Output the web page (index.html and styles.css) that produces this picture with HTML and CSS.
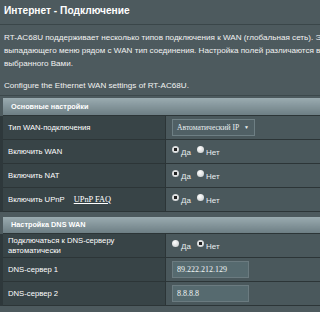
FILE: index.html
```html
<!DOCTYPE html>
<html>
<head>
    <meta charset="utf-8">
    <title>Интернет - Подключение</title>
    <link rel="stylesheet" href="styles.css">
</head>
<body>
    <div class="page">
        <div class="page-title">Интернет - Подключение</div>
        <div class="split-line"></div>
        <div class="desc">
            RT-AC68U поддерживает несколько типов подключения к WAN (глобальная сеть). Эти типы выбираются из<br>
            выпадающего меню рядом с WAN тип соединения. Настройка полей различаются в зависимости от типа подключения,<br>
            выбранного Вами.
        </div>
        <div class="desc desc-config">Configure the Ethernet WAN settings of RT-AC68U.</div>
        <div class="table-line"></div>

        <table class="form-table">
            <thead>
                <tr><td colspan="2">Основные настройки</td></tr>
            </thead>
            <tbody>
                <tr>
                    <th>Тип WAN-подключения</th>
                    <td>
                        <div class="select-box">Автоматический IP <span class="arrow">&#9660;</span></div>
                    </td>
                </tr>
                <tr>
                    <th>Включить WAN</th>
                    <td>
                        <label class="radio-item"><input type="radio" name="wan" class="radio" checked>Да</label>
                        <label class="radio-item"><input type="radio" name="wan" class="radio">Нет</label>
                    </td>
                </tr>
                <tr>
                    <th>Включить NAT</th>
                    <td>
                        <label class="radio-item"><input type="radio" name="nat" class="radio" checked>Да</label>
                        <label class="radio-item"><input type="radio" name="nat" class="radio">Нет</label>
                    </td>
                </tr>
                <tr>
                    <th>Включить UPnP <a href="#" class="faq-link">UPnP FAQ</a></th>
                    <td>
                        <label class="radio-item"><input type="radio" name="upnp" class="radio" checked>Да</label>
                        <label class="radio-item"><input type="radio" name="upnp" class="radio">Нет</label>
                    </td>
                </tr>
            </tbody>
        </table>

        <table class="form-table dns-table">
            <thead>
                <tr><td colspan="2">Настройка DNS WAN</td></tr>
            </thead>
            <tbody>
                <tr>
                    <th class="two-line">Подключаться к DNS-серверу<br>автоматически</th>
                    <td>
                        <label class="radio-item"><input type="radio" name="dns" class="radio">Да</label>
                        <label class="radio-item"><input type="radio" name="dns" class="radio" checked>Нет</label>
                    </td>
                </tr>
                <tr>
                    <th>DNS-сервер 1</th>
                    <td><input type="text" class="input-box" value="89.222.212.129"></td>
                </tr>
                <tr>
                    <th>DNS-сервер 2</th>
                    <td><input type="text" class="input-box" value="8.8.8.8"></td>
                </tr>
            </tbody>
        </table>
    </div>
</body>
</html>
```

FILE: styles.css
```css
* {
    box-sizing: border-box;
}

body {
    margin:0;
    background:#4d5a5e;
    color:#fff;
    font-family:"Liberation Sans", Arial, sans-serif;
    overflow:hidden;
}

.page {
    width:420px;
    padding-top:4px;
}

.page-title {
    padding-left:4px;
    font-size:10.2px;
    font-weight:bold;
    line-height:14px;
}

.split-line {
    height:1px;
    margin-top:6px;
    background:#3a4649;
}

.desc {
    padding-left:4px;
    margin-top:6px;
    font-size:8.1px;
    line-height:13px;
    white-space:nowrap;
    color:#f2f2f2;
}

.desc-config {
    margin-top:9px;
}

.table-line {
    height:1px;
    margin-top:3px;
    background:#3c484b;
}

.form-table {
    width:100%;
    border-collapse:collapse;
    margin-top:2px;
    font-size:7.7px;
}

.dns-table {
    margin-top:5px;
}

.form-table thead td {
    height:17px;
    padding:0 0 0 8px;
    border-left:3px solid #4d5a5e;
    background:linear-gradient(#9aabb0, #6d7e84);
    font-size:7.3px;
    font-weight:bold;
    color:#fff;
}

.form-table th {
    width:164px;
    height:24px;
    padding:0 0 0 5px;
    border-left:3px solid #2e383b;
    border-bottom:1px solid #2c3537;
    border-right:1px solid #2c3537;
    background:#384447;
    font-weight:normal;
    text-align:left;
}

.form-table th.two-line {
    line-height:10px;
}

.form-table td {
    height:24px;
    padding:0 0 0 6px;
    border-bottom:1px solid #2c3537;
    background:#4a585c;
}

.faq-link {
    margin-left:7px;
    font-family:"Liberation Serif", serif;
    font-size:8.4px;
    color:#fff;
}

.select-box {
    display:inline-block;
    width:83px;
    height:17px;
    line-height:15px;
    padding-left:4px;
    border:1px solid #6e7f84;
    background:#506065;
    font-family:"Liberation Serif", serif;
    font-size:7.6px;
    white-space:nowrap;
    color:#e8eef0;
}

.arrow {
    margin-left:3px;
    font-size:5px;
    vertical-align:1px;
}

.radio-item {
    display:inline-block;
    margin-right:4px;
    font-size:8px;
    color:#e8eef0;
}

.radio {
    appearance:none;
    -webkit-appearance:none;
    width:7px;
    height:7px;
    margin:0 2px 0 0;
    border-radius:50%;
    background:radial-gradient(circle at 40% 35%, #ffffff, #c4c8c9);
    vertical-align:2px;
}

.radio:checked {
    background:radial-gradient(circle, #222 0, #222 1.5px, #e2e4e5 2px, #c4c8c9 100%);
}

.input-box {
    width:77px;
    height:17px;
    padding:0 0 0 4px;
    border:1px solid #6b7b80;
    background:#566a6f;
    font-family:"Liberation Serif", serif;
    font-size:8px;
    color:#f0f4f5;
    outline:none;
}
```
